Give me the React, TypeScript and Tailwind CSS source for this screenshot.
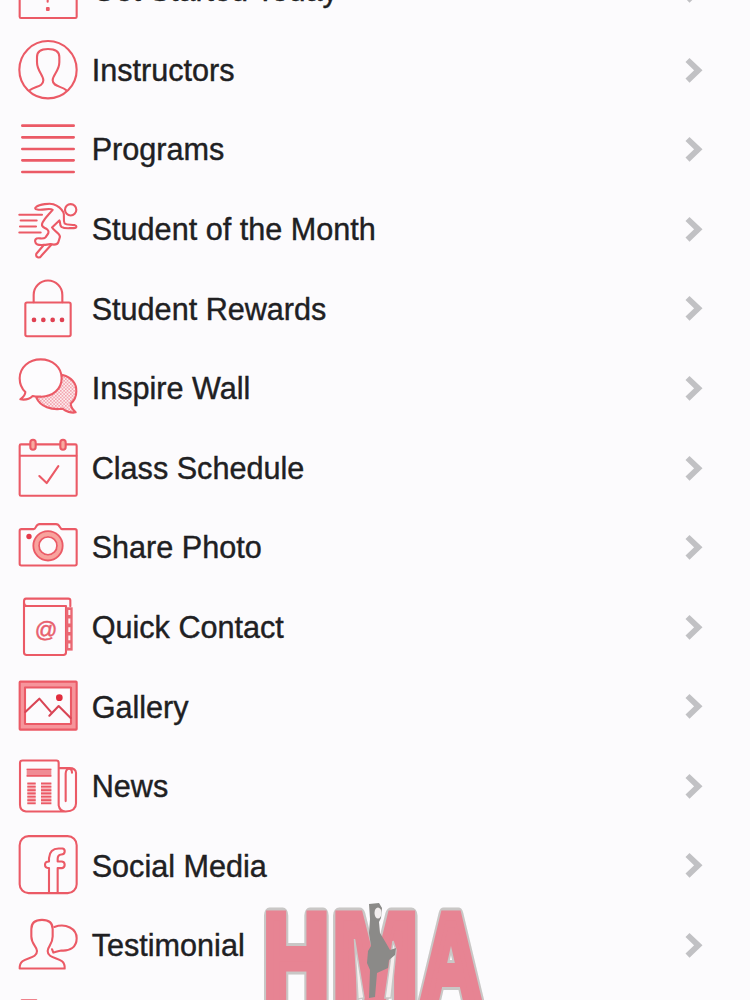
import type { ReactNode } from "react";

function Icon({ box, children }: { box: string; children: ReactNode }) {
  return (
    <svg
      viewBox={box}
      className="h-[60px] w-[60px] shrink-0 overflow-visible"
      fill="none"
      stroke="#eb5a66"
      strokeWidth="6.3"
      strokeLinecap="round"
      strokeLinejoin="round"
    >
      {children}
    </svg>
  );
}

const HintIcon = (
  <Icon box="54 -120 180 180">
    <rect x="59" y="-100" width="171" height="154" rx="4" />
    <path d="M132 -25a11 11 0 1 1 15 10q-4 4-4 20" />
    <rect x="141" y="24" width="5" height="6" fill="#ea5562" />
  </Icon>
);

const PersonIcon = (
  <Icon box="54 119 180 180">
    <circle cx="144" cy="208" r="86" />
    <path d="M90 269C104 257 130 260 130 240C130 224 111 212 111 186V170C111 152 126 146 144 146S178 152 178 170V186C178 212 158 224 158 240C158 260 186 257 198 269" />
  </Icon>
);

const LinesIcon = (
  <Icon box="54 28 180 180">
    <path strokeWidth="8" d="M67 48H221M67 83H221M67 118H221M67 152H221M67 187H221" />
  </Icon>
);

const RunnerIcon = (
  <Icon box="54 266.6 180 180">
    <circle cx="212" cy="299" r="17" />
    <path d="M58 314H126M62 331H110M60 349H108M58 367H122" />
    <path d="M109 290C118 282 150 279 160 282C172 286 184 295 190 306C195 315 188 330 194 340C200 345 212 343 224 345C232 348 230 354 222 354C208 353 196 357 184 350C178 344 182 336 178 331L156 352C160 362 178 366 180 380L175 396C172 405 160 404 151 402C138 404 120 406 112 403C104 400 103 388 110 385C118 383 130 388 136 382C144 372 150 366 142 358C134 352 124 352 126 342C130 328 146 314 158 299C148 292 128 302 112 298C104 298 104 293 109 290Z" />
    <path d="M132 404L109 431C106 442 118 446 124 437L154 404" />
  </Icon>
);

const LockIcon = (
  <Icon box="54 25.3 180 180">
    <rect x="76" y="99" width="136" height="101" rx="5" />
    <path d="M101 98V76A43 43 0 0 1 187 76V98" />
    <g fill="#e04152" stroke="none">
      <circle cx="102" cy="151" r="7" />
      <circle cx="130" cy="151" r="7" />
      <circle cx="158" cy="151" r="7" />
      <circle cx="186" cy="151" r="7" />
    </g>
  </Icon>
);

const BubblesIcon = (
  <Icon box="54 264 180 180">
    <defs>
      <pattern id="dots" width="10" height="10" patternUnits="userSpaceOnUse">
        <rect width="10" height="10" fill="#fdecef" stroke="none" />
        <circle cx="2.5" cy="2.5" r="2.4" fill="#ee8c97" stroke="none" />
        <circle cx="7.5" cy="7.5" r="2.4" fill="#ee8c97" stroke="none" />
      </pattern>
    </defs>
    <path
      fill="url(#dots)"
      d="M188 315C215 322 230 341 229 364C229 383 221 394 212 401C213 413 219 420 227 427C214 430 197 424 188 416C155 421 121 411 109 383Z"
    />
    <path
      fill="#fdfcfe"
      d="M122 268C158 268 185 292 185 324C185 357 158 381 122 380C111 380 104 380 98 378C90 386 74 390 61 388C69 382 76 376 76 366C64 355 59 341 59 325C59 292 87 268 122 268Z"
    />
  </Icon>
);

const CalendarIcon = (
  <Icon box="54 22.8 180 180">
    <rect x="59" y="42" width="171" height="154" rx="4" />
    <path d="M60 76H229" />
    <rect x="91" y="28" width="16" height="30" rx="8" fill="#f8a99f" />
    <rect x="181" y="28" width="16" height="30" rx="8" fill="#f8a99f" />
    <path d="M118 137L140 158L175 107" />
  </Icon>
);

const CameraIcon = (
  <Icon box="54 261.5 180 180">
    <path d="M64 298H101C109 298 106 283 119 283H168C181 283 178 298 187 298H225Q230 298 230 303V402Q230 407 225 407H64Q59 407 59 402V303Q59 298 64 298Z" />
    <circle cx="144" cy="348" r="36" stroke="#f8a39d" strokeWidth="14" />
    <circle cx="144" cy="348" r="44" strokeWidth="5.5" />
    <circle cx="144" cy="348" r="27" strokeWidth="5.5" />
    <circle cx="87" cy="320" r="8" fill="#e5394a" stroke="none" />
  </Icon>
);

const BookIcon = (
  <Icon box="54 50.2 180 180">
    <path d="M211 78V61Q211 55 205 55H78Q72 55 72 64V216Q72 224 80 224H190Q198 224 198 216V77H80Q72 77 72 66" />
    <path strokeWidth="20" strokeLinecap="butt" stroke="#ea6873" d="M208 81V211" />
    <path strokeWidth="6" stroke="#fdf0f2" strokeLinecap="butt" d="M208 89V104M208 115V130M208 141V155M208 166V180M208 190V203" />
    <text
      x="138"
      y="171"
      textAnchor="middle"
      fontFamily="Liberation Sans, sans-serif"
      fontSize="67"
      fill="#e8606d"
      stroke="#e8606d"
      strokeWidth="1.5"
    >
      @
    </text>
  </Icon>
);

const GalleryIcon = (
  <Icon box="54 289 180 180">
    <rect x="66" y="313" width="157" height="130" stroke="#f6959b" strokeWidth="15" />
    <rect x="59" y="306" width="171" height="144" rx="2" />
    <rect x="75" y="323" width="138" height="110" />
    <path d="M76 397L118 357L152 396M148 408L176 379L212 415" stroke="#d94555" />
    <circle cx="178" cy="354" r="10" fill="#e02c3d" stroke="none" />
  </Icon>
);

const NewsIcon = (
  <Icon box="54 47.7 180 180">
    <path d="M197 214H78Q60 212 60 194V68Q60 61 68 61H169Q176 61 176 68V196Q179 214 197 214Q228 213 228 190V98Q227 84 208 84H178" />
    <path d="M197 183V100Q198 86 207 86Q216 86 216 98" />
    <path strokeLinecap="butt" stroke="#f08b94" strokeWidth="24" d="M80 98H154" />
    <path strokeLinecap="butt" strokeWidth="4" d="M80 88H154M80 107H154" />
    <path strokeLinecap="butt" stroke="#f7b9be" strokeWidth="62" d="M82 160H107M123 160H154" />
    <path
      strokeLinecap="butt"
      strokeWidth="5"
      d="M82 130H107M82 140H107M82 150H107M82 160H107M82 170H107M82 180H107M82 190H107M123 130H154M123 140H154M123 150H154M123 160H154M123 170H154M123 180H154M123 190H154"
    />
  </Icon>
);

const SocialIcon = (
  <Icon box="54 286.5 180 180">
    <rect x="59" y="290" width="171" height="171" rx="27" />
    <path d="M147 460V386Q135 386 135 376Q135 366 147 366V356Q149 327 176 327H188Q195 329 194 337Q193 345 184 345Q173 346 173 358V366H186Q194 367 194 376Q194 385 186 386H173V460" />
  </Icon>
);

const TestimonialIcon = (
  <Icon box="54 45.3 180 180">
    <path d="M59 206C57 166 111 183 111 153C111 140 94 133 94 110V87C94 68 107 60 126 60S158 68 158 87V110C158 133 143 140 143 153C143 183 197 166 194 206Z" />
    <path d="M163 81C198 69 230 86 230 115C230 142 210 154 184 152C176 153 171 155 160 158L156 148" />
  </Icon>
);

const NextIcon = (
  <Icon box="54 284 180 180">
    <path d="M65 300H109V330H222V440H65Z" />
  </Icon>
);

const rows: { label: string; icon: ReactNode }[] = [
  { label: "Get Started Today", icon: HintIcon },
  { label: "Instructors", icon: PersonIcon },
  { label: "Programs", icon: LinesIcon },
  { label: "Student of the Month", icon: RunnerIcon },
  { label: "Student Rewards", icon: LockIcon },
  { label: "Inspire Wall", icon: BubblesIcon },
  { label: "Class Schedule", icon: CalendarIcon },
  { label: "Share Photo", icon: CameraIcon },
  { label: "Quick Contact", icon: BookIcon },
  { label: "Gallery", icon: GalleryIcon },
  { label: "News", icon: NewsIcon },
  { label: "Social Media", icon: SocialIcon },
  { label: "Testimonial", icon: TestimonialIcon },
  { label: "", icon: NextIcon },
];

function Chevron() {
  return (
    <svg viewBox="0 0 24 30" className="h-[30px] w-6 shrink-0" fill="none" stroke="#c1c1c4" strokeWidth="5.8">
      <path d="M6.5 5L17.3 15.3L6.5 25.6" />
    </svg>
  );
}

function Letters({ className, width }: { className: string; width: number }) {
  return (
    <g className={className} strokeWidth={width} fontFamily="Liberation Sans, sans-serif" fontWeight="700" fontSize="130">
      <text transform="translate(263.6 1004.5) scale(.7 1)">H</text>
      <text transform="translate(332.5 1004.5) scale(.79 1)">M</text>
      <text transform="translate(420 1004.5) scale(.66 1)">A</text>
    </g>
  );
}

function Logo() {
  return (
    <svg viewBox="250 890 250 110" className="absolute bottom-0 left-[250px] h-[110px] w-[250px]">
      <Letters className="fill-[#c9c7c6] stroke-[#c9c7c6] [stroke-linejoin:round]" width={16} />
      <Letters className="fill-[#e78493] stroke-[#e78493] [stroke-miterlimit:3]" width={10} />
      <path d="M354.5 939L364 998L358 999Z" fill="#f4efee" stroke="#c9c7c6" strokeWidth="1.5" />
      <path d="M393 941L396 950L391 998L385 998Z" fill="#f4efee" stroke="#c9c7c6" strokeWidth="1.5" />
      <path
        fill="#8b8a88"
        d="M369 904L379 903L382 908L381 918L379 922L380 933L386 943L390 950L396 948L395 955L389 960L388 968L377 973L375 997L369 998L370 970L367 963L368 951L371 946L369 933L370 919Z"
      />
      <ellipse cx="378" cy="913" rx="3.5" ry="5.5" fill="#f2eeee" />
    </svg>
  );
}

export default function App() {
  return (
    <main className="relative h-[1000px] w-[750px] overflow-hidden bg-[#fcfbfd] font-['Liberation_Sans',sans-serif]">
      <Logo />
      <ul className="relative -mt-[49.7px] flex flex-col">
        {rows.map((row, i) => (
          <li key={i} className="flex h-[79.58px] shrink-0 items-center pr-[45px] pl-[18px]">
            {row.icon}
            <span className="ml-[13.7px] flex-1 pt-px text-[30.6px] leading-none whitespace-nowrap text-[#202022] [-webkit-text-stroke:0.4px_#202022]">
              {row.label}
            </span>
            {row.label && <Chevron />}
          </li>
        ))}
      </ul>
    </main>
  );
}
